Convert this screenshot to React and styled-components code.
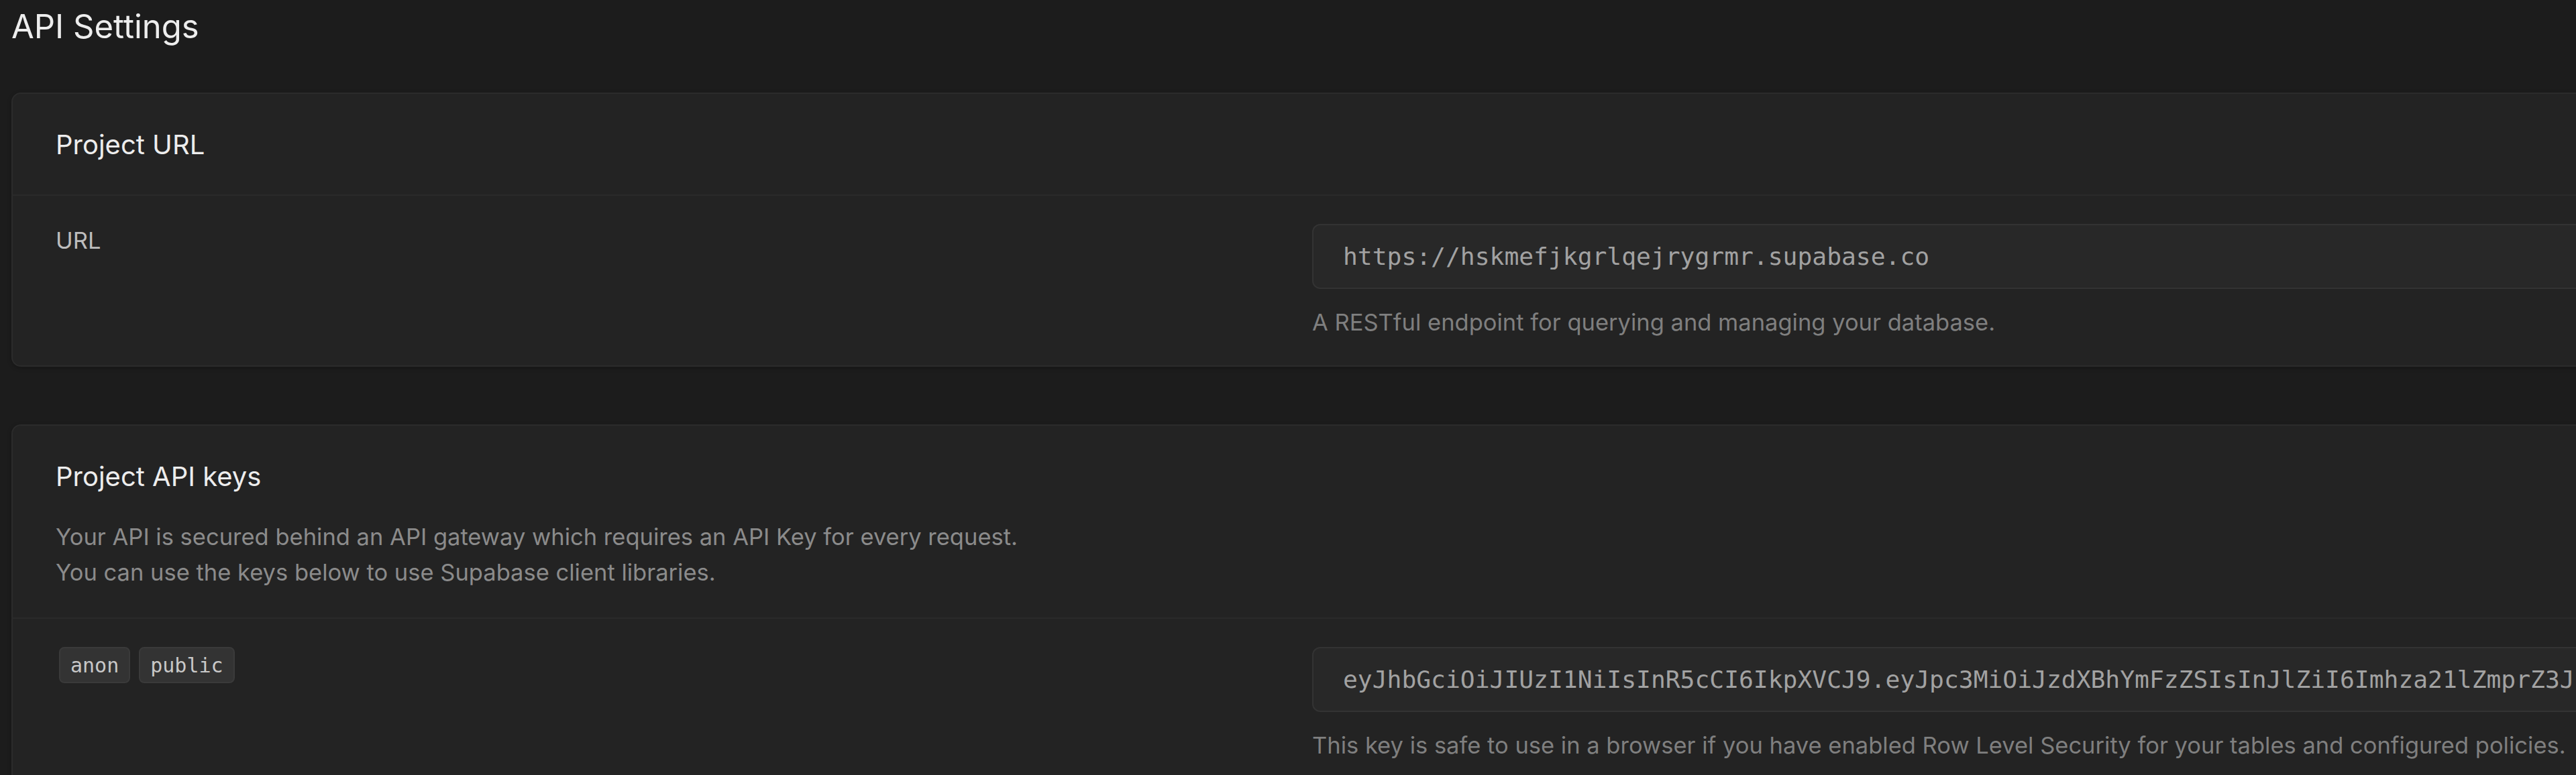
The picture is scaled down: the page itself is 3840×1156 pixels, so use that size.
import React from "react";
import styled, { createGlobalStyle } from "styled-components";

// Estilos globales
const GlobalStyle = createGlobalStyle`
  html, body {
    margin: 0;
    padding: 0;
    background: #1c1c1c;
    overflow: hidden;
  }
  body {
    font-family: Inter, "Noto Sans", sans-serif;
  }
`;

// Página
const Page = styled.div`
  width: 4100px;
  padding: 10px 0 0 17px;
  display: flex;
  flex-direction: column;
`;

const PageTitle = styled.h1`
  margin: 0 0 68px;
  font-size: 49px;
  line-height: 60px;
  font-weight: 400;
  color: #ededed;
`;

const Sections = styled.div`
  display: flex;
  flex-direction: column;
  gap: 86px;
`;

// Tarjeta
const Card = styled.section`
  background: #232323;
  border: 2px solid #2b2b2b;
  border-radius: 14px;
  box-shadow: 0 2px 6px rgba(0, 0, 0, 0.25);
`;

const CardHeader = styled.div`
  padding: 46px 64px ${(p) => (p.$tight ? "41px" : "44px")};
  border-bottom: 2px solid #2a2a2a;
  display: flex;
  flex-direction: column;
  gap: 33px;
`;

const CardTitle = styled.h2`
  margin: 0;
  font-size: 40px;
  line-height: 60px;
  font-weight: 400;
  color: #ededed;
`;

const CardDescription = styled.p`
  margin: 0;
  font-size: 34.5px;
  line-height: 53px;
  color: #8b8b8b;
`;

// Fila de campo
const FieldRow = styled.div`
  display: grid;
  grid-template-columns: 1873px 1fr;
  padding: 42px 64px 38px;
`;

const Label = styled.div`
  font-size: 34.5px;
  line-height: 50px;
  color: #bdbdbd;
`;

const Tags = styled.div`
  display: flex;
  gap: 13px;
  align-items: flex-start;
  padding-left: 5px;
`;

const Tag = styled.span`
  height: 54px;
  box-sizing: border-box;
  display: inline-flex;
  align-items: center;
  padding: 0 15px;
  border: 2px solid #3a3a3a;
  border-radius: 8px;
  background: #333333;
  color: #c8c8c8;
  font-family: "DejaVu Sans Mono", "Liberation Mono", monospace;
  font-size: 30px;
`;

const Control = styled.div`
  display: flex;
  flex-direction: column;
  min-width: 0;
`;

const CodeInput = styled.input`
  height: 97px;
  box-sizing: border-box;
  width: 100%;
  padding: 0 44px;
  background: #282828;
  border: 2px solid #333333;
  border-radius: 12px;
  color: #a2a2a2;
  font-family: "DejaVu Sans Mono", "Liberation Mono", monospace;
  font-size: 36.3px;
  outline: none;
`;

const Help = styled.p`
  margin: 23px 0 0;
  font-size: 34.5px;
  line-height: 53px;
  color: #7f7f7f;
`;

const ANON_KEY =
  "eyJhbGciOiJIUzI1NiIsInR5cCI6IkpXVCJ9.eyJpc3MiOiJzdXBhYmFzZSIsInJlZiI6Imhza21lZmprZ3JscWVqcnlncm1yIiwicm9sZSI6ImFub24iLCJpYXQiOjE2ODAwMDAwMDAsImV4cCI6MTk5NTU3NjAwMH0.Qx7b2mVYkFz";

const App = () => {
  return (
    <>
      <GlobalStyle />
      <Page>
        <PageTitle>API Settings</PageTitle>
        <Sections>
          <Card>
            <CardHeader>
              <CardTitle>Project URL</CardTitle>
            </CardHeader>
            <FieldRow>
              <Label>URL</Label>
              <Control>
                <CodeInput readOnly value="https://hskmefjkgrlqejrygrmr.supabase.co" />
                <Help>A RESTful endpoint for querying and managing your database.</Help>
              </Control>
            </FieldRow>
          </Card>

          <Card>
            <CardHeader $tight>
              <CardTitle>Project API keys</CardTitle>
              <CardDescription>
                Your API is secured behind an API gateway which requires an API Key for every request.
                <br />
                You can use the keys below to use Supabase client libraries.
              </CardDescription>
            </CardHeader>
            <FieldRow>
              <Tags>
                <Tag>anon</Tag>
                <Tag>public</Tag>
              </Tags>
              <Control>
                <CodeInput readOnly value={ANON_KEY} />
                <Help>
                  This key is safe to use in a browser if you have enabled Row Level Security for your
                  tables and configured policies.
                </Help>
              </Control>
            </FieldRow>
          </Card>
        </Sections>
      </Page>
    </>
  );
};

export default App;
